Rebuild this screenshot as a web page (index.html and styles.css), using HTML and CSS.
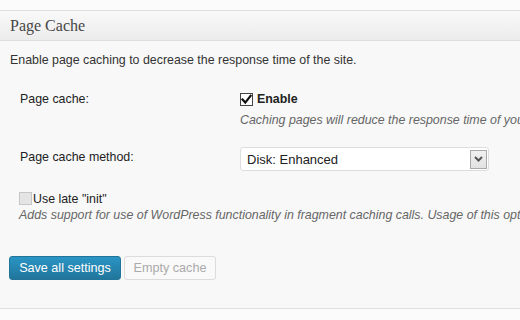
FILE: index.html
```html
<!DOCTYPE html>
<html>
<head>
<meta charset="utf-8">
<link rel="stylesheet" href="styles.css">
</head>
<body>
<div class="postbox">
  <h3 class="hndle">Page Cache</h3>
  <div class="inside">
    <p class="intro">Enable page caching to decrease the response time of the site.</p>
    <div class="row row-first">
      <div class="label">Page cache:</div>
      <div class="field">
        <label class="check"><span class="box"><svg width="11" height="11" viewBox="0 0 11 11"><path d="M1.5 5.5 L4.3 8.6 L9.6 1.8" fill="none" stroke="#111" stroke-width="2.2" stroke-linecap="square"/></svg></span><b>Enable</b></label>
        <p class="desc">Caching pages will reduce the response time of your site and increase the scale of your web server.</p>
      </div>
    </div>
    <div class="row row-second">
      <div class="label label-select">Page cache method:</div>
      <div class="field">
        <div class="select"><span>Disk: Enhanced</span><span class="arrow"><svg width="9" height="6" viewBox="0 0 9 6"><path d="M1 1 L4.5 4.5 L8 1" fill="none" stroke="#555" stroke-width="2"/></svg></span></div>
      </div>
    </div>
    <div class="late">
      <label class="check-late"><span class="box box-disabled"></span>Use late "init"</label>
      <p class="desc">Adds support for use of WordPress functionality in fragment caching calls. Usage of this option may increase the response time of your site.</p>
    </div>
    <div class="buttons">
      <span class="btn btn-primary">Save all settings</span>
      <span class="btn btn-disabled">Empty cache</span>
    </div>
  </div>
</div>
</body>
</html>
```

FILE: styles.css
```css
html, body {
  margin: 0;
  padding: 0;
  background: #fbfbfb;
  overflow: hidden;
  width: 520px;
  height: 320px;
}
body {
  font-family: "Liberation Sans", Arial, sans-serif;
  font-size: 12.4px;
  color: #333;
}
.postbox {
  margin-top: 10px;
  border-top: 1px solid #dfdfdf;
  border-bottom: 1px solid #dfdfdf;
  background: #f8f8f8;
  white-space: nowrap;
}
.hndle {
  margin: 0;
  height: 29px;
  line-height: 30px;
  padding: 0 10px;
  font-family: "Liberation Serif", Georgia, serif;
  font-weight: normal;
  font-size: 16px;
  color: #464646;
  background: linear-gradient(to bottom, #f9f9f9, #ececec);
  border-bottom: 1px solid #dfdfdf;
}
.inside {
  padding-bottom: 28px;
}
.intro {
  margin: 10px 0 0;
  padding-left: 10px;
  line-height: 18px;
  color: #333;
}
.row {
  display: flex;
}
.row-first {
  margin-top: 21px;
}
.row-second {
  margin-top: 18px;
}
.label {
  flex: none;
  width: 220px;
  padding-left: 20px;
  line-height: 18px;
  color: #222;
}
.label-select {
  padding-top: 1px;
}
.field {
  flex: none;
  display: flex;
  flex-direction: column;
}
.check {
  display: flex;
  align-items: center;
  height: 18px;
  color: #222;
}
.box {
  flex: none;
  box-sizing: border-box;
  width: 13px;
  height: 13px;
  border: 1px solid #444;
  background: #fff;
  margin-right: 4px;
  display: flex;
  align-items: center;
  justify-content: center;
}
.desc {
  margin: 3px 0 0;
  line-height: 18px;
  font-style: italic;
  color: #666;
}
.select {
  box-sizing: border-box;
  width: 249px;
  height: 24px;
  border: 1px solid #ddd;
  border-radius: 3px;
  background: #fff;
  display: flex;
  align-items: center;
  justify-content: space-between;
  padding: 0 1px 0 6px;
  color: #222;
  font-size: 13px;
}
.arrow {
  box-sizing: border-box;
  width: 17px;
  height: 19px;
  border: 1px solid #a9a9a9;
  background: linear-gradient(to bottom, #f0f0f0, #e2e2e2);
  display: flex;
  align-items: center;
  justify-content: center;
}
.late {
  margin-top: 19px;
  padding-left: 19px;
}
.check-late {
  display: flex;
  align-items: center;
  height: 17px;
  color: #222;
}
.box-disabled {
  border: 1px solid #c6c6c6;
  background: #e4e4e4;
  margin-right: 1px;
}
.late .desc {
  margin-top: 0;
  line-height: 17px;
}
.buttons {
  margin-top: 32px;
  padding-left: 9px;
  display: flex;
  gap: 3px;
}
.btn {
  box-sizing: border-box;
  height: 24px;
  line-height: 22px;
  padding: 0 6px;
  border-radius: 3px;
  font-size: 12.6px;
}
.btn-primary {
  width: 112px;
  text-align: center;
  color: #fff;
  background: linear-gradient(to bottom, #2a95c5, #21759b);
  border: 1px solid #21759b;
}
.btn-disabled {
  width: 92px;
  text-align: center;
  color: #aaa;
  background: #f9f9f9;
  border: 1px solid #dcdcdc;
}
```
